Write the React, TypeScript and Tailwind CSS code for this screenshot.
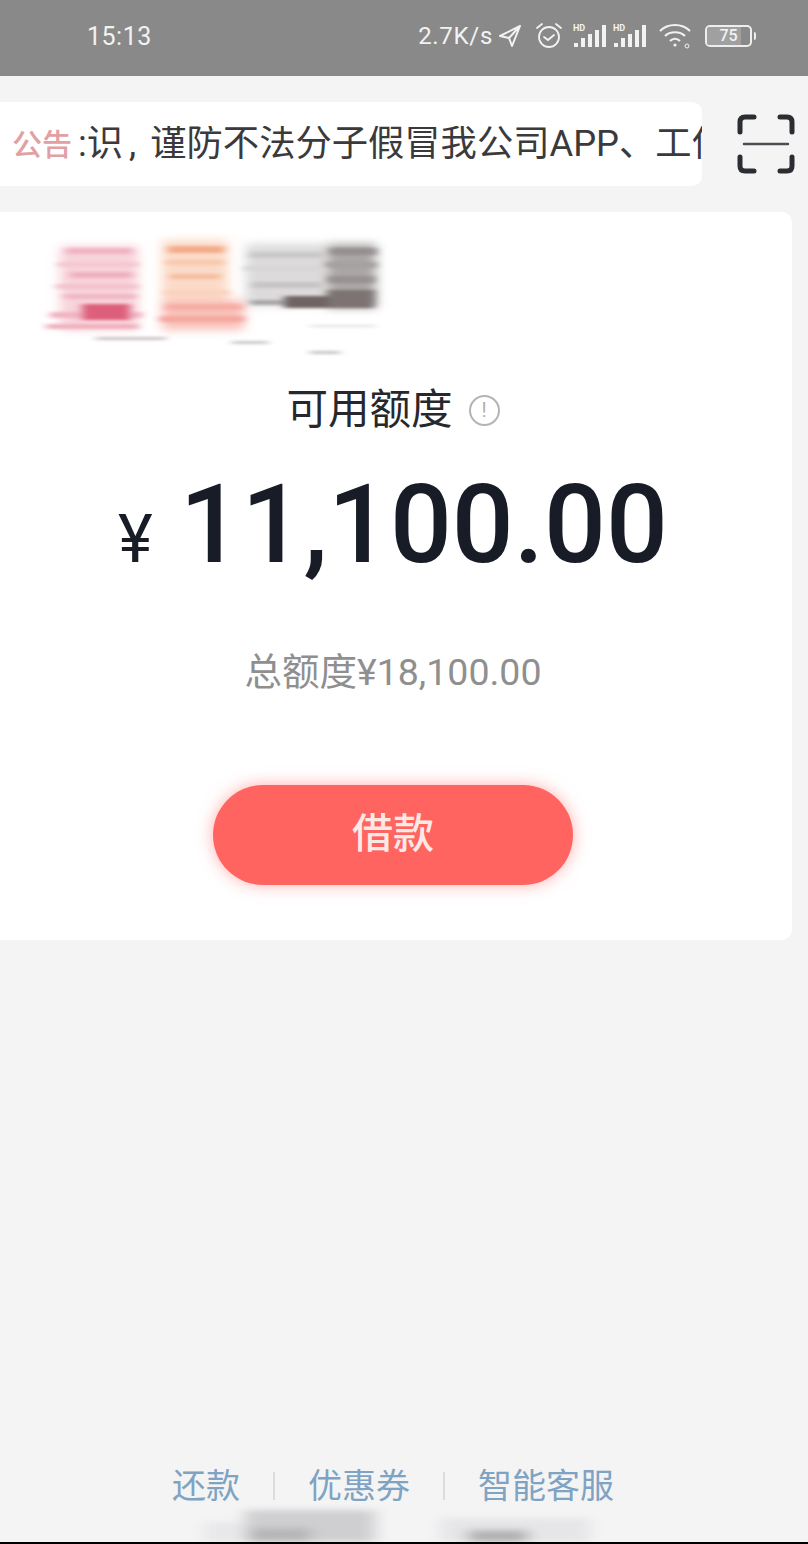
const cjk = "font-['Roboto','Noto_Sans_CJK_SC',sans-serif]"

// x, y, width, height, colour of the scribbled streaks over the logo
const logoStreaks: [number, number, number, number, string][] = [
  [66, 36, 66, 6, '#f0b2c2'],
  [58, 50, 80, 5, '#f5c8d2'],
  [70, 60, 62, 6, '#eeb0c0'],
  [56, 72, 82, 5, '#f3c2cd'],
  [64, 82, 72, 5, '#f0b6c4'],
  [50, 100, 92, 6, '#f1b4c2'],
  [46, 112, 92, 5, '#efb0be'],
  [168, 34, 56, 7, '#f4ab88'],
  [166, 48, 58, 5, '#f8c8ac'],
  [170, 62, 50, 5, '#f6bca0'],
  [164, 78, 66, 5, '#fad2c0'],
  [166, 92, 76, 6, '#f6aea6'],
  [160, 104, 84, 6, '#f4a8a0'],
  [250, 40, 74, 6, '#cac8c8'],
  [244, 54, 80, 5, '#d8d6d6'],
  [252, 70, 70, 6, '#c6c4c4'],
  [330, 36, 46, 7, '#969090'],
  [326, 50, 50, 6, '#a6a0a0'],
  [328, 64, 46, 7, '#989292'],
]

function SignalBars({ className }: { className: string }) {
  return (
    <svg width="33" height="26" viewBox="0 0 33 26" className={className} fill="currentColor">
      <text x="0" y="8" fontSize="9" fontWeight="700" fontFamily="Roboto, sans-serif">HD</text>
      <rect x="1" y="20" width="4" height="4" />
      <rect x="8" y="15" width="4" height="9" />
      <rect x="15" y="11" width="4" height="13" />
      <rect x="22" y="7" width="4" height="17" />
      <rect x="29" y="2" width="4" height="22" />
    </svg>
  )
}

function StatusIcons() {
  return (
    <div className="flex items-center text-[#f2f2f2]">
      <span className="text-[24px] leading-none tracking-[0.7px]">2.7K/s</span>
      {/* location arrow */}
      <svg width="26" height="26" viewBox="0 0 26 26" fill="none" stroke="currentColor" strokeWidth="2" className="ml-[4px]">
        <path d="M23 3 L3 13 L12 15 L15 23 Z M23 3 L12 15" strokeLinejoin="round" />
      </svg>
      {/* alarm */}
      <svg width="28" height="28" viewBox="0 0 28 28" fill="none" stroke="currentColor" strokeWidth="1.8" className="ml-[12px]">
        <circle cx="14" cy="15" r="10" />
        <path d="M9 15 L13 18 L19 13" strokeLinecap="round" />
        <path d="M2 6 L7 2 M26 6 L21 2" strokeLinecap="round" />
      </svg>
      <SignalBars className="ml-[10px]" />
      <SignalBars className="ml-[7px]" />
      {/* wifi */}
      <svg width="34" height="26" viewBox="0 0 34 26" fill="none" stroke="currentColor" strokeWidth="2.2" className="ml-[12px]">
        <path d="M2 8 C10 0 24 0 32 8" />
        <path d="M7 13 C12 8 22 8 27 13" />
        <path d="M12 18 C15 15 19 15 22 18" />
        <circle cx="17" cy="22" r="1.6" fill="currentColor" stroke="none" />
        <circle cx="29" cy="23" r="2" strokeWidth="1" />
      </svg>
      {/* battery */}
      <div className="ml-[13px] flex items-center">
        <div className="relative flex h-[22px] w-[47px] items-center justify-center overflow-hidden rounded-[5px] border-2 border-[#eeeeee]">
          <div className="absolute inset-y-0 left-0 w-[34px] bg-[#a0a0a0]" />
          <span className="relative text-[16px] leading-none font-medium">75</span>
        </div>
        <div className="ml-[2px] h-[8px] w-[2px] rounded-r-sm bg-[#eeeeee]" />
      </div>
    </div>
  )
}

function ScanIcon() {
  return (
    <svg width="60" height="60" viewBox="0 0 60 60" fill="none" stroke="#2b2d33" strokeWidth="5" strokeLinecap="round" strokeLinejoin="round">
      <path d="M3 18 V8 Q3 3 8 3 H17" />
      <path d="M43 3 H50 Q55 3 55 8 V18" />
      <path d="M3 43 V52 Q3 57 8 57 H17" />
      <path d="M43 57 H50 Q55 57 55 52 V43" />
      <path d="M7 30 H51" strokeWidth="2.5" stroke="#4a4c52" />
    </svg>
  )
}

// smudged-out logo at the top of the card
function CardSmudge() {
  return (
    <svg width="420" height="150" viewBox="0 0 420 150" className="absolute left-0 top-0">
      <defs>
        <filter id="b1" x="-30%" y="-30%" width="160%" height="160%"><feGaussianBlur stdDeviation="6 4" /></filter>
        <filter id="b2" x="-30%" y="-100%" width="160%" height="300%"><feGaussianBlur stdDeviation="4 1.8" /></filter>
      </defs>
      <g filter="url(#b1)">
        <rect x="60" y="34" width="78" height="84" fill="#f8d3db" />
        <rect x="162" y="28" width="66" height="60" fill="#fbdac8" />
        <rect x="162" y="88" width="82" height="30" fill="#f9c0b8" />
        <rect x="246" y="32" width="82" height="62" fill="#dcdada" />
        <rect x="328" y="32" width="48" height="64" fill="#aaa6a6" />
      </g>
      <g filter="url(#b2)">
        {logoStreaks.map(([x, y, w, h, fill]) => (
          <rect key={`${x}-${y}`} x={x} y={y} width={w} height={h} fill={fill} />
        ))}
        <rect x="82" y="92" width="48" height="16" fill="#de5f7c" />
        <rect x="284" y="84" width="46" height="12" fill="#6f6464" />
        <rect x="328" y="78" width="46" height="18" fill="#7d7373" />
        <rect x="250" y="88" width="34" height="5" fill="#a8a4a4" />
        <rect x="96" y="125" width="70" height="3" fill="#cdbfc3" />
        <rect x="232" y="129" width="36" height="3" fill="#c8c8c8" />
        <rect x="310" y="139" width="30" height="3" fill="#c4c4c4" />
        <rect x="310" y="113" width="66" height="2" fill="#e2e0e0" />
      </g>
    </svg>
  )
}

function FooterSmudge() {
  return (
    <svg width="808" height="44" viewBox="0 0 808 44" className="absolute bottom-[2px] left-0">
      <defs>
        <filter id="b3" x="-30%" y="-100%" width="160%" height="300%"><feGaussianBlur stdDeviation="8 3" /></filter>
      </defs>
      <g filter="url(#b3)">
        <rect x="205" y="24" width="50" height="20" fill="#e8e8ea" />
        <rect x="245" y="12" width="130" height="32" fill="#cfcfd1" />
        <rect x="250" y="30" width="60" height="14" fill="#b6b6b8" />
        <rect x="440" y="20" width="150" height="24" fill="#e6e6e8" />
        <rect x="468" y="32" width="60" height="12" fill="#b0b0b2" />
      </g>
    </svg>
  )
}

export default function App() {
  return (
    <div className={`relative flex h-[1544px] w-[808px] flex-col overflow-hidden bg-[#f4f4f5] ${cjk}`}>
      {/* status bar */}
      <div className="flex h-[76px] shrink-0 items-center justify-between bg-[#898989] pb-[4px] pl-[87px] pr-[52px] text-[#f2f2f2]">
        <span className="text-[25px] leading-none tracking-[0.5px]">15:13</span>
        <StatusIcons />
      </div>

      {/* notice bar + scan */}
      <div className="mt-[26px] flex h-[84px] shrink-0 items-center">
        <div className="flex h-full w-[702px] items-center overflow-hidden rounded-r-[10px] bg-white pl-[12px]">
          <span className="shrink-0 text-[30px] font-medium text-[#e0a0a4]">公告</span>
          <div className="ml-[6px] min-w-0 flex-1 overflow-hidden">
            <span className="block whitespace-nowrap text-[36.3px] leading-none text-[#3a3a3c]">
              :识<span className="ml-[6px] mr-[14px]">,</span>谨防不法分子假冒我公司APP、工作
            </span>
          </div>
        </div>
        <div className="ml-[35px]">
          <ScanIcon />
        </div>
      </div>

      {/* credit card */}
      <div className="relative mt-[26px] flex h-[728px] w-[792px] shrink-0 flex-col items-center rounded-r-[10px] bg-white pr-[6px]">
        <CardSmudge />
        <div className="mt-[172px] flex items-center">
          <span className="text-[41.5px] leading-[52px] text-[#26282d]">可用额度</span>
          <span className="ml-[16px] flex h-[31px] w-[31px] items-center justify-center rounded-full border-2 border-[#b4b4b4] text-[20px] leading-none text-[#b0b0b0]">!</span>
        </div>
        <div className="mt-[23px] flex items-baseline text-[#181c26]">
          <span className="text-[66px] leading-none">¥</span>
          <span className="ml-[27px] text-[109px] leading-[132px] font-medium">11,100.00</span>
        </div>
        <div className="mt-[59px] text-[37.5px] leading-[44px] text-[#8f8f8f]">总额度¥18,100.00</div>
        <button className="mt-[91px] flex h-[100px] w-[360px] items-center justify-center rounded-full bg-[#ff6460] text-[41px] font-medium text-[#fbe9e6] shadow-[0_0_16px_rgba(255,100,96,0.5)]">
          借款
        </button>
      </div>

      {/* bottom links */}
      <div className="mt-auto mb-[37px] flex items-center justify-center pr-[22px] text-[34px] leading-[42px] text-[#7fa3c2]">
        <span>还款</span>
        <span className="mx-[33px] h-[28px] w-[2px] bg-[#d8dde0]" />
        <span>优惠券</span>
        <span className="mx-[33px] h-[28px] w-[2px] bg-[#d8dde0]" />
        <span>智能客服</span>
      </div>
      <FooterSmudge />
      <div className="absolute inset-x-0 bottom-0 h-[2px] bg-black" />
    </div>
  )
}
